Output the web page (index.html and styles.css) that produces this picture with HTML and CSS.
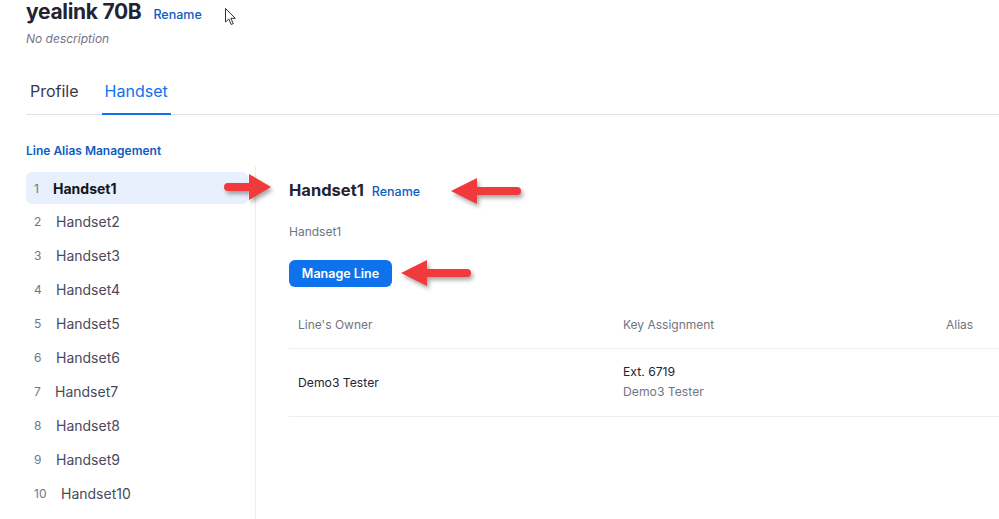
FILE: index.html
```html
<!DOCTYPE html>
<html>
<head>
<meta charset="utf-8">
<link rel="stylesheet" href="styles.css">
</head>
<body>
<div class="page">
  <header class="head">
    <div class="title-row">
      <h1 class="title">yealink 70B</h1>
      <a class="link rename-top">Rename</a>
    </div>
    <div class="desc">No description</div>
  </header>
  <nav class="tabs">
    <div class="tab">Profile</div>
    <div class="tab active">Handset</div>
  </nav>
  <div class="section-label">Line Alias Management</div>
  <div class="content">
    <ul class="side">
      <li class="item sel"><span class="num">1</span><span class="name">Handset1</span></li>
      <li class="item"><span class="num">2</span><span class="name">Handset2</span></li>
      <li class="item"><span class="num">3</span><span class="name">Handset3</span></li>
      <li class="item"><span class="num">4</span><span class="name">Handset4</span></li>
      <li class="item"><span class="num">5</span><span class="name">Handset5</span></li>
      <li class="item"><span class="num">6</span><span class="name">Handset6</span></li>
      <li class="item"><span class="num">7</span><span class="name n7">Handset7</span></li>
      <li class="item"><span class="num">8</span><span class="name">Handset8</span></li>
      <li class="item"><span class="num">9</span><span class="name">Handset9</span></li>
      <li class="item"><span class="num">10</span><span class="name n10">Handset10</span></li>
    </ul>
    <main class="main">
      <div class="h-row">
        <h2 class="h-title">Handset1</h2>
        <a class="link rename-sm">Rename</a>
      </div>
      <div class="sub">Handset1</div>
      <button class="btn">Manage Line</button>
      <div class="table">
        <div class="tr th">
          <div class="c1">Line's Owner</div>
          <div class="c2">Key Assignment</div>
          <div class="c3">Alias</div>
        </div>
        <div class="tr td">
          <div class="c1">Demo3 Tester</div>
          <div class="c2"><div>Ext. 6719</div><div class="muted">Demo3 Tester</div></div>
          <div class="c3"></div>
        </div>
      </div>
    </main>
  </div>

  <svg class="arrow a1" width="52" height="30" viewBox="0 0 52 30">
    <line x1="5" y1="15" x2="30" y2="15" stroke="#f2393b" stroke-width="8" stroke-linecap="round"/>
    <polygon points="26,2 48,15 26,28" fill="#f2393b"/>
  </svg>
  <svg class="arrow a2" width="76" height="30" viewBox="0 0 76 30">
    <line x1="28" y1="14" x2="70" y2="14" stroke="#f2393b" stroke-width="8" stroke-linecap="round"/>
    <polygon points="30,1 4,14 30,27" fill="#f2393b"/>
  </svg>
  <svg class="arrow a3" width="76" height="30" viewBox="0 0 76 30">
    <line x1="28" y1="14" x2="70" y2="14" stroke="#f2393b" stroke-width="8" stroke-linecap="round"/>
    <polygon points="30,1 4,14 30,27" fill="#f2393b"/>
  </svg>
  <svg class="cursor" width="14" height="20" viewBox="0 0 14 20">
    <path d="M1.5 1.5 L1.5 15 L4.8 12 L7.2 17.5 L9.2 16.6 L6.9 11.3 L11.3 11.3 Z" fill="#fff" stroke="#333" stroke-width="1" stroke-linejoin="round"/>
  </svg>
</div>
</body>
</html>
```

FILE: styles.css
```css
* { box-sizing: border-box; }
html, body { margin: 0; padding: 0; background: #fff; }
body {
  font-family: Inter, "Noto Sans", "Liberation Sans", sans-serif;
  color: #232333;
  width: 999px;
  height: 519px;
  overflow: hidden;
}
.page { position: relative; width: 999px; height: 519px; }

.head { padding: 0 0 0 26px; }
.title-row { display: flex; align-items: baseline; gap: 12px; height: 26px; }
.title { margin: 0; font-size: 21px; font-weight: 700; line-height: 24px; color: #232333; letter-spacing: -0.3px; }
.link { color: #0e5dc4; text-decoration: none; font-weight: 500; }
.rename-top { font-size: 12.5px; }
.desc { margin-top: 5px; font-size: 12px; font-style: italic; color: #747487; line-height: 16px; }

.tabs {
  display: flex;
  margin: 24px 0 0 26px;
  border-bottom: 1px solid #dfe3e8;
  height: 44px;
}
.tab {
  font-size: 16px;
  color: #39394d;
  padding: 10px 4px 0 4px;
  line-height: 20px;
  margin-right: 19px;
}
.tab.active {
  color: #0e72ed;
  border-bottom: 2px solid #0e72ed;
  margin-bottom: -1px;
  padding: 10px 3px 0 3px;
}

.section-label {
  margin: 28px 0 0 26px;
  font-size: 12px;
  font-weight: 600;
  color: #0e5dc4;
  line-height: 16px;
}

.content { display: flex; margin-top: 7px; }
.side {
  flex-shrink: 0;
  list-style: none;
  margin: 0 0 0 26px;
  padding: 6px 7px 0 0;
  width: 230px;
  border-right: 1px solid #ededf1;
  height: 360px;
}
.item {
  display: flex;
  align-items: center;
  height: 32px;
  margin-bottom: 1.9px;
  border-radius: 6px;
  font-size: 14px;
  color: #4a4a5c;
}
.item.sel { background: #e7f0fc; color: #131619; font-weight: 700; }
.num { width: 30px; padding-left: 8px; font-size: 12px; color: #747487; font-weight: 400; flex-shrink: 0; }
.item.sel .num { width: 27px; }
.n7 { margin-left: -1px; }
.n10 { margin-left: 0; }
.item:last-child .num { width: 35px; }

.main { flex: 1; min-width: 0; padding-left: 33px; padding-top: 14px; }
.h-row { display: flex; align-items: baseline; gap: 8px; height: 22px; }
.h-title { margin: 0; font-size: 16.5px; font-weight: 700; color: #232333; line-height: 20px; }
.rename-sm { font-size: 12.5px; }
.sub { margin-top: 22px; font-size: 12px; color: #6e7680; line-height: 16px; }
.btn {
  margin-top: 20px;
  display: block;
  width: 103px;
  height: 27px;
  border: none;
  border-radius: 6px;
  background: #0e72ed;
  color: #fff;
  font-family: inherit;
  font-size: 12.5px;
  font-weight: 600;
  padding: 0;
}

.table { margin-top: 13px; width: 720px; }
.tr { display: grid; grid-template-columns: 325px 323px 1fr; border-bottom: 1px solid #ededf1; }
.tr > div { padding-left: 9px; }
.th { height: 49px; align-items: center; font-size: 12px; color: #6e7680; }
.td { height: 68px; align-items: center; font-size: 12.2px; color: #232333; }
.td .c2 { line-height: 20px; padding-bottom: 2px; }
.muted { color: #747487; }

.arrow { position: absolute; filter: drop-shadow(2px 3px 2px rgba(0,0,0,0.35)); }
.a1 { left: 223px; top: 172px; }
.a2 { left: 447px; top: 177px; }
.a3 { left: 397px; top: 259px; }
.cursor { position: absolute; left: 224px; top: 7px; }
```
